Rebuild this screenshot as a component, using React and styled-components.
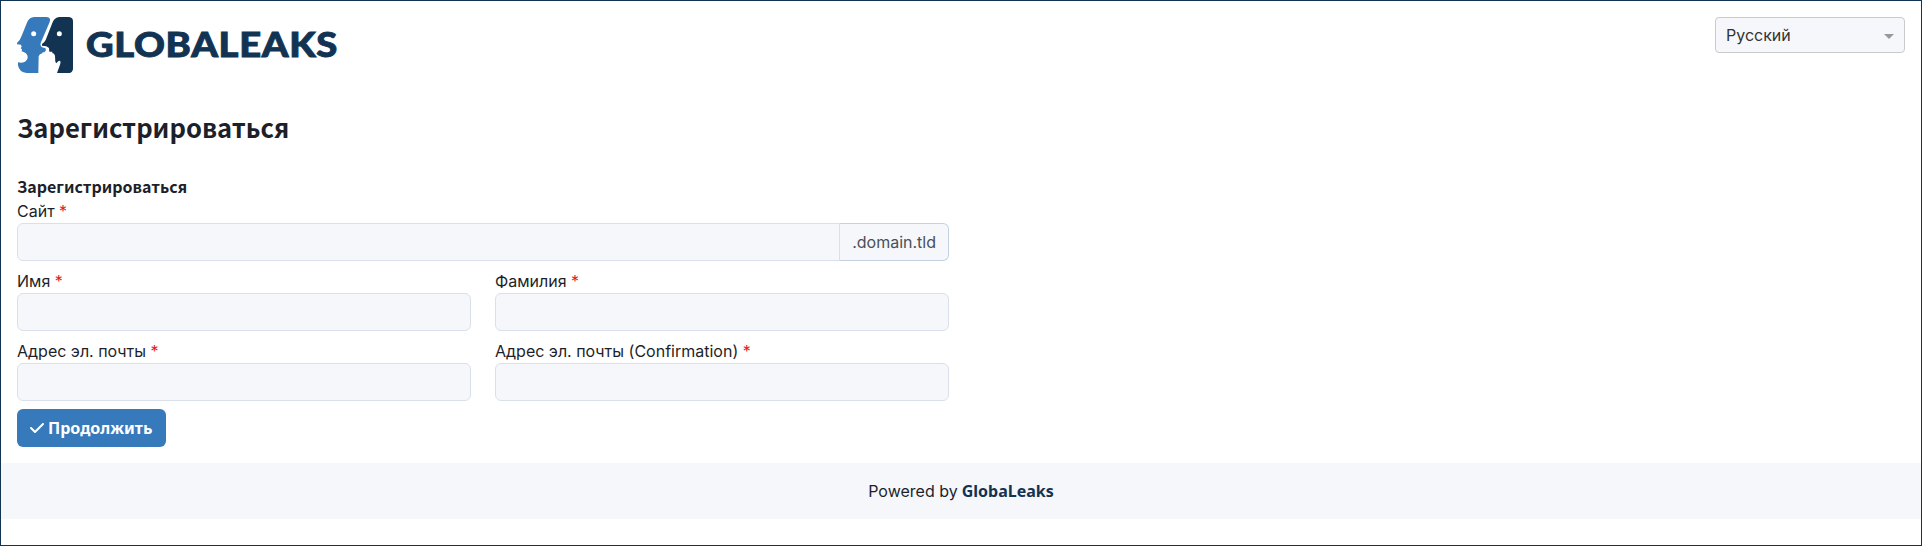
import React from 'react';
import styled, { createGlobalStyle } from 'styled-components';
import { FaCheck } from 'react-icons/fa6';

const GlobalStyle = createGlobalStyle`
  *, *::before, *::after { box-sizing: border-box; }
  body {
    margin: 0;
    background: #fff;
    color: #1d1f2a;
    font: 400 16px/24px Inter, 'Noto Sans', sans-serif;
  }
`;

const Page = styled.div`
  display: flex;
  flex-direction: column;
  height: 546px;
  border: 1px solid #123352;
`;
const Header = styled.header`
  display: flex;
  justify-content: space-between;
  align-items: flex-start;
  padding: 16px 16px 0;
`;
const Logo = styled.svg`
  display: block;
  width: 324px;
  height: 56px;
`;
const Wordmark = styled.text`
  font: 900 34px Lato, sans-serif;
  letter-spacing: 0.6px;
  fill: #123352;
  stroke: #123352;
  stroke-width: 0.9px;
`;
const LanguageSelect = styled.div`
  display: flex;
  align-items: center;
  justify-content: space-between;
  width: 190px;
  height: 36px;
  padding: 0 10px;
  border: 1px solid #c8cacc;
  border-radius: 4px;
  background: #f5f7fb;
  color: #333;
`;
const Caret = styled.span`
  margin-top: 3px;
  border: 5px solid transparent;
  border-top-color: #999;
  border-bottom: 0;
`;
const Title = styled.h1`
  margin: 37px 16px 0;
  font: 700 25.6px/34px 'Noto Sans CJK SC', sans-serif;
`;
const Form = styled.form`
  display: flex;
  flex-direction: column;
  align-items: flex-start;
  width: 932px;
  margin: 31px 16px 16px;
`;
const SectionTitle = styled.div`
  height: 24px;
  font: 700 16px/22px 'Noto Sans CJK SC', sans-serif;
`;
const Row = styled.div`
  display: grid;
  grid-template-columns: repeat(${(p) => p.$columns || 1}, 1fr);
  column-gap: 24px;
  width: 100%;
  margin-bottom: 8px;
`;
const FieldBox = styled.label`
  display: block;
`;
const Required = styled.span`
  color: #e5191f;
`;
const Group = styled.div`
  display: flex;
`;
const Input = styled.input`
  flex: 1;
  min-width: 0;
  height: 38px;
  padding: 6px 12px;
  border: 1px solid #dae0ea;
  border-radius: ${(p) => (p.$joined ? '6px 0 0 6px' : '6px')};
  background: #f5f7fb;
  font: inherit;
  outline: none;
`;
const Suffix = styled.span`
  height: 38px;
  margin-left: -1px;
  padding: 6px 12px;
  border: 1px solid #c5d1e2;
  border-left-color: #dae0ea;
  border-radius: 0 6px 6px 0;
  background: #f5f7fb;
  color: #495057;
`;
const Button = styled.button`
  display: flex;
  align-items: center;
  gap: 3px;
  width: 149px;
  height: 38px;
  padding: 0 12px;
  border: 0;
  border-radius: 6px;
  background: #377abc;
  color: #fff;
  font: 700 16px/24px 'Noto Sans', sans-serif;
  white-space: nowrap;
`;
const Footer = styled.footer`
  display: flex;
  align-items: center;
  justify-content: center;
  gap: 4px;
  height: 56px;
  background: #f5f7fb;
`;
const FooterLink = styled.a`
  color: #123352;
  font-family: 'Noto Sans', sans-serif;
  font-weight: 700;
`;

function Field({ label, suffix }) {
  return (
    <FieldBox>
      {label} <Required>*</Required>
      <Group>
        <Input $joined={Boolean(suffix)} />
        {suffix && <Suffix>{suffix}</Suffix>}
      </Group>
    </FieldBox>
  );
}

function BrandLogo() {
  return (
    <Logo viewBox="0 0 324 56" role="img" aria-label="GlobaLeaks">
      <g transform="scale(.33333) translate(-21 -21)">
        <path
          fill="#377abc"
          d="M72 21H110Q124 22 119 36L92 99Q89 107 95 111Q100 114 106 114L108 121L103 127H98L97 130Q88 132 86 139L85 189H50Q28 188 24 166V157Q35 160 45 155Q56 148 52 136Q49 129 41 126L35 124L36 118L32 115L35 110L33 104L21 103V99Q31 90 36 75L52 35Q59 22 72 21Z"
        />
        <path
          fill="#123352"
          d="M148 21H177Q189 22 189 34V176Q188 188 177 189H141L150 164Q154 152 148 152Q144 153 139 160L136 155L135 137Q133 130 127 129V125H118L117 114L109 109L96 107V102Q103 98 107 90L127 39Q133 22 148 21Z"
        />
        <circle cx="71" cy="71" r="7.5" fill="#fff" />
        <circle cx="148" cy="71" r="7.5" fill="#fff" />
      </g>
      <Wordmark x="69" y="40" textLength="252" lengthAdjust="spacingAndGlyphs">
        GLOBALEAKS
      </Wordmark>
    </Logo>
  );
}

export default function App() {
  return (
    <Page>
      <GlobalStyle />
      <Header>
        <BrandLogo />
        <LanguageSelect>
          Русский
          <Caret />
        </LanguageSelect>
      </Header>
      <Title>Зарегистрироваться</Title>
      <Form>
        <SectionTitle>Зарегистрироваться</SectionTitle>
        <Row>
          <Field label="Сайт" suffix=".domain.tld" />
        </Row>
        <Row $columns={2}>
          <Field label="Имя" />
          <Field label="Фамилия" />
        </Row>
        <Row $columns={2}>
          <Field label="Адрес эл. почты" />
          <Field label="Адрес эл. почты (Confirmation)" />
        </Row>
        <Button type="button">
          <FaCheck size={16} />
          Продолжить
        </Button>
      </Form>
      <Footer>
        Powered by <FooterLink>GlobaLeaks</FooterLink>
      </Footer>
    </Page>
  );
}
